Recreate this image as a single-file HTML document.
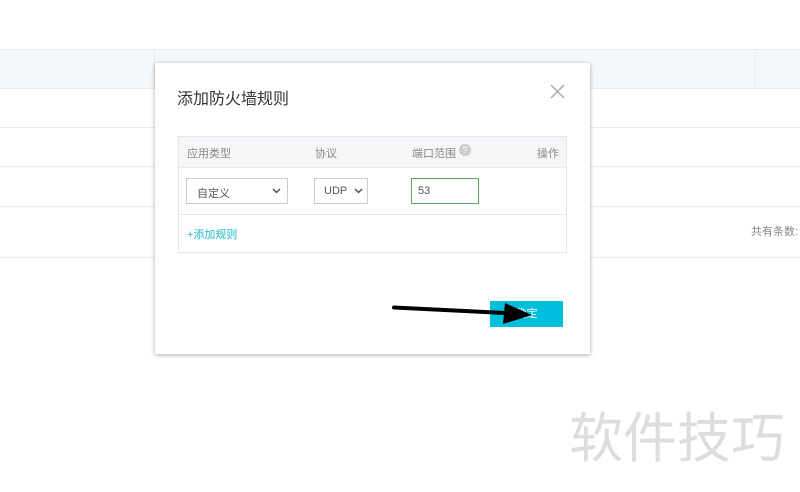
<!DOCTYPE html>
<html><head><meta charset="utf-8"><style>
body{margin:0;width:800px;height:492px;background:#fff;position:relative;overflow:hidden;font-family:"Liberation Sans","Noto Sans CJK SC",sans-serif;}
.a{position:absolute}
.hl{position:absolute;left:0;width:800px;height:1px;background:#e8ecef}
</style></head><body>
<div class="a" style="left:0;top:49px;width:800px;height:39px;background:#f5f8fa"></div>
<div class="hl" style="top:49px"></div>
<div class="hl" style="top:88px"></div>
<div class="hl" style="top:127px"></div>
<div class="hl" style="top:166px"></div>
<div class="hl" style="top:206px"></div>
<div class="hl" style="top:257px"></div>
<div class="a" style="left:154px;top:49px;width:1px;height:39px;background:#e8ecef"></div>
<div class="a" style="left:755px;top:49px;width:1px;height:39px;background:#e8ecef"></div>
<div class="a" style="left:751px;top:223px;font-size:11px;color:#888;white-space:nowrap">共有条数:</div>

<div class="a" style="left:155px;top:63px;width:435px;height:291px;background:#fff;box-shadow:0 1px 4px rgba(0,0,0,.35)">
 <div class="a" style="left:22px;top:22px;font-size:16px;color:#333">添加防火墙规则</div>
 <svg class="a" style="left:395px;top:21px" width="15" height="15"><path d="M1 1L14 14M14 1L1 14" stroke="#aaa" stroke-width="1.5"/></svg>
 <div class="a" style="left:23px;top:73px;width:387px;height:115px;border:1px solid #e3e6ea">
  <div class="a" style="left:0;top:0;width:387px;height:30px;background:#f4f6f8;border-bottom:1px solid #e8eaec"></div>
  <div class="a" style="left:8px;top:8px;font-size:11px;color:#888">应用类型</div>
  <div class="a" style="left:136px;top:8px;font-size:11px;color:#888">协议</div>
  <div class="a" style="left:233px;top:8px;font-size:11px;color:#888">端口范围</div>
  <div class="a" style="left:280px;top:7px;width:12px;height:12px;border-radius:50%;background:#ccc;color:#fff;font-size:9px;text-align:center;line-height:12px">?</div>
  <div class="a" style="left:358px;top:8px;font-size:11px;color:#888">操作</div>
  <div class="a" style="left:7px;top:41px;width:100px;height:24px;border:1px solid #ccc"><span class="a" style="left:10px;top:6px;font-size:11px;color:#555">自定义</span><svg class="a" style="left:85px;top:9px" width="9" height="6"><path d="M1 1L4.5 4.5L8 1" stroke="#444" stroke-width="1.3" fill="none"/></svg></div>
  <div class="a" style="left:135px;top:41px;width:52px;height:24px;border:1px solid #ccc"><span class="a" style="left:9px;top:6px;font-size:11px;color:#555">UDP</span><svg class="a" style="left:39px;top:9px" width="9" height="6"><path d="M1 1L4.5 4.5L8 1" stroke="#444" stroke-width="1.3" fill="none"/></svg></div>
  <div class="a" style="left:232px;top:41px;width:66px;height:24px;border:1px solid #5cab5c"><span class="a" style="left:6px;top:6px;font-size:11px;color:#555">53</span></div>
  <div class="a" style="left:0;top:77px;width:387px;height:1px;background:#e8eaec"></div>
  <div class="a" style="left:8px;top:89px;font-size:11px;color:#1eb6c9">+添加规则</div>
 </div>
 <div class="a" style="left:335px;top:238px;width:73px;height:26px;background:#00bfdc;color:#fff;font-size:11px;text-align:center;line-height:26px">确定</div>
</div>
<svg class="a" style="left:0;top:0" width="800" height="492"><path d="M394 307.5L505 313" stroke="#000" stroke-width="4" stroke-linecap="round"/><path d="M505 303L532 315L503 324Z" fill="#000"/></svg>
<div class="a" style="left:569px;top:394px;font-size:54px;color:#ddd;white-space:nowrap">软件技巧</div>
</body></html>
